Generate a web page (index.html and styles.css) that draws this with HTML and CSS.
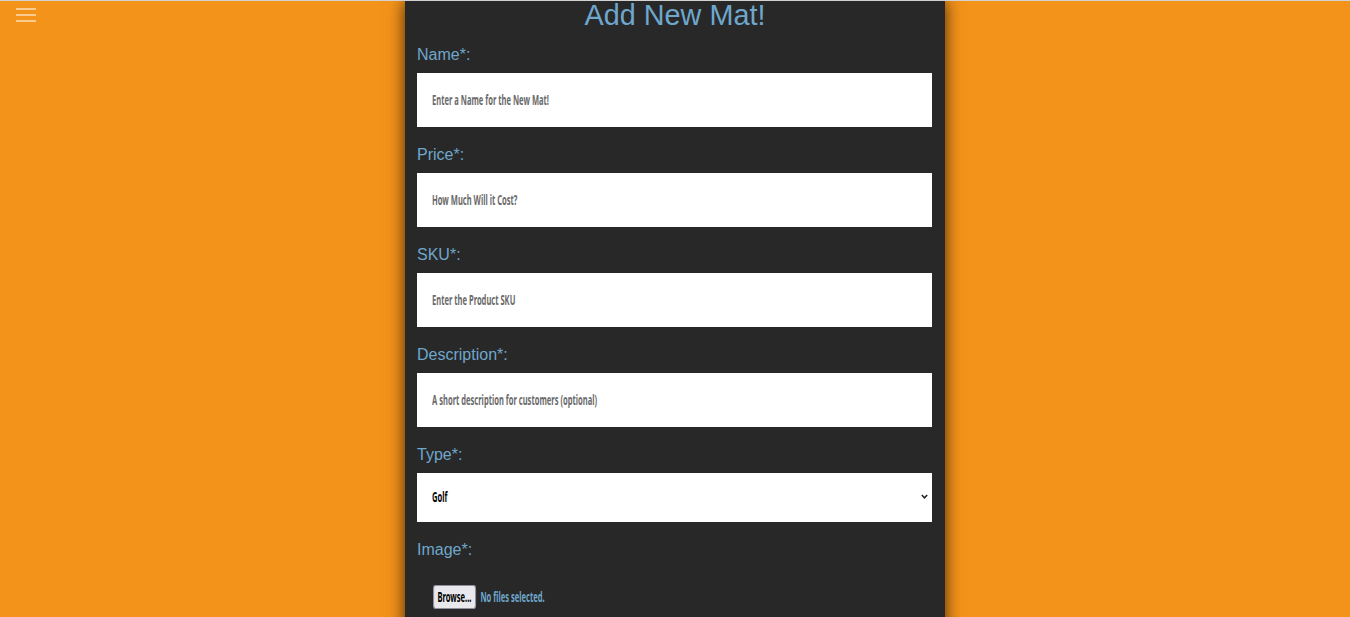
FILE: index.html
```html
<!DOCTYPE html>
<html lang="en">
<head>
<meta charset="utf-8">
<title>Add New Mat!</title>
<link rel="stylesheet" href="styles.css">
</head>
<body>
<div class="topline"></div>
<button class="menu-btn" aria-label="Menu">
  <span class="bar"></span><span class="bar"></span><span class="bar"></span>
</button>
<main class="panel">
  <h1 class="title">Add New Mat!</h1>
  <form class="form">
    <label class="field-label" for="name">Name*:</label>
    <div class="field-box">
      <input class="field-input" id="name" type="text" placeholder="Enter a Name for the New Mat!">
    </div>
    <label class="field-label" for="price">Price*:</label>
    <div class="field-box">
      <input class="field-input" id="price" type="text" placeholder="How Much Will it Cost?">
    </div>
    <label class="field-label" for="sku">SKU*:</label>
    <div class="field-box">
      <input class="field-input" id="sku" type="text" placeholder="Enter the Product SKU">
    </div>
    <label class="field-label" for="desc">Description*:</label>
    <div class="field-box">
      <input class="field-input" id="desc" type="text" placeholder="A short description for customers (optional)">
    </div>
    <label class="field-label" for="type">Type*:</label>
    <div class="field-box select-box">
      <select class="field-input field-select" id="type">
        <option>Golf</option>
        <option>Yoga</option>
      </select>
      <svg class="chev" width="7" height="5" viewBox="0 0 7 5"><path d="M0.8 1 L3.5 3.8 L6.2 1" fill="none" stroke="#222" stroke-width="1.5"/></svg>
    </div>
    <label class="field-label" for="image">Image*:</label>
    <div class="file-row">
      <div class="file-inner">
        <input class="file-hidden" id="image" type="file">
        <label class="file-btn" for="image">Browse...</label>
        <span class="file-status">No files selected.</span>
      </div>
    </div>
  </form>
</main>
</body>
</html>
```
FILE: styles.css
```css
:root {
  --sx: 0.56;
}
html, body {
  margin: 0;
  padding: 0;
  height: 100%;
}
body {
  background: #f4931a;
  font-family: "Liberation Sans", Arial, sans-serif;
  overflow: hidden;
}
.topline {
  height: 1px;
  background: #d2d2d2;
  position: relative;
  z-index: 3;
}
.menu-btn {
  position: absolute;
  left: 16px;
  top: 8px;
  width: 20px;
  padding: 0;
  border: 0;
  background: transparent;
  display: flex;
  flex-direction: column;
  gap: 4px;
  cursor: pointer;
}
.bar {
  display: block;
  width: 20px;
  height: 2px;
  background: rgba(255, 255, 255, 0.52);
}
.panel {
  width: 516px;
  margin: 0 auto;
  padding: 0 12px 30px;
  background: #282828;
  min-height: 616px;
  box-shadow: 0 0 16px rgba(0, 0, 0, 0.75);
}
.title {
  margin: 0;
  font-size: 28.8px;
  line-height: 1;
  font-weight: normal;
  text-align: center;
  color: #6fa7cc;
}
.form {
  display: flex;
  flex-direction: column;
  padding-top: 16px;
}
.field-label {
  display: block;
  font-size: 16px;
  line-height: 18px;
  color: #6fa7cc;
  margin-bottom: 9px;
}
.field-box {
  width: 515px;
  height: 54px;
  margin-bottom: 19px;
  overflow: hidden;
  position: relative;
}
.select-box {
  height: 49px;
}
.field-input,
.file-inner {
  font-family: "Noto Sans", "Open Sans", "DejaVu Sans Condensed", sans-serif;
  font-weight: bold;
  font-size: 13.5px;
  letter-spacing: 0;
}
.field-input {
  box-sizing: border-box;
  width: calc(515px / var(--sx));
  height: 100%;
  border: 0;
  border-radius: 0;
  padding: 0 0 0 calc(15px / var(--sx));
  margin: 0;
  background: #fff;
  color: #000;
  outline: none;
  transform: scaleX(var(--sx));
  transform-origin: 0 0;
  display: block;
}
.field-input::placeholder {
  color: #6a6a6a;
  opacity: 1;
}
.field-select {
  appearance: none;
  -webkit-appearance: none;
}
.chev {
  position: absolute;
  right: 4px;
  top: 21px;
  pointer-events: none;
}
.file-row {
  padding: 17px 16px;
}
.file-inner {
  display: flex;
  align-items: center;
  gap: 8px;
  transform: scaleX(var(--sx));
  transform-origin: 0 0;
}
.file-hidden {
  display: none;
}
.file-btn {
  box-sizing: border-box;
  height: 24px;
  padding: 0 6px;
  display: flex;
  align-items: center;
  background: #e9e9ed;
  border: 2px solid #8f8f9d;
  border-width: 1px 2px;
  border-radius: 4px;
  color: #000;
}
.file-status {
  color: #6fa7cc;
}
```
